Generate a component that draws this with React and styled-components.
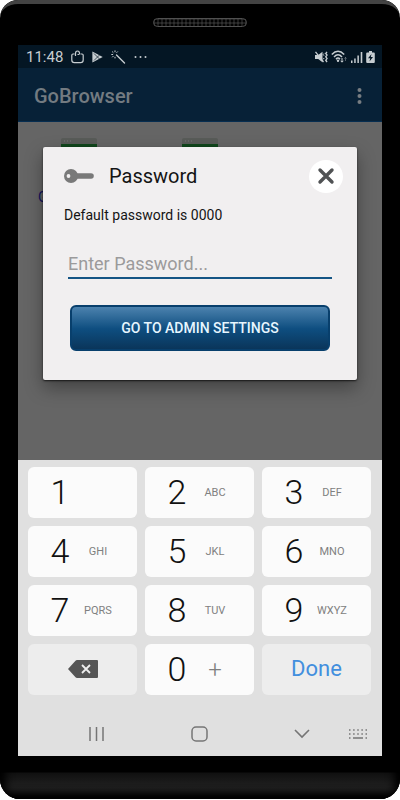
import React from 'react';
import styled, { createGlobalStyle, css } from 'styled-components';

const colors = {
  status: '#041624',
  bar: '#072137',
  page: '#656565',
  dialog: '#f1eff0',
  accent: '#155585',
  keyboard: '#e0e0e0',
  key: '#fbfbfb',
  action: '#ededed',
  done: '#428fde',
  nav: '#757575',
};

const GlobalStyle = createGlobalStyle`
  * {
    box-sizing: border-box;
  }
  body {
    margin: 0;
    background: #fff;
    font-family: Roboto, "Liberation Sans", sans-serif;
  }
  button, input {
    font-family: inherit;
    margin: 0;
  }
  svg {
    display: block;
  }
`;

const Phone = styled.div`
  display: flex;
  flex-direction: column;
  border-radius: 18px 18px 20px 20px;
  background: #000;
  overflow: hidden;
`;

const PhoneTop = styled.header`
  display: flex;
  justify-content: center;
  height: 45px;
  padding-top: 14px;
  border-top: 4px solid #434343;
  border-radius: 18px 18px 0 0;
`;

const Speaker = styled.div`
  width: 94px;
  height: 9px;
  border: 1px solid #505050;
  border-radius: 5px;
  background: radial-gradient(circle, #000 1px, #303030 2px) 0 0 / 4px 4px;
`;

const PhoneBottom = styled.footer`
  height: 43px;
  background: linear-gradient(#000 16px, #101010 17px, #292929 39px, #090909 43px);
  box-shadow: inset 6px -5px 8px #000, inset -6px -5px 8px #000;
`;

const Screen = styled.div`
  display: flex;
  flex-direction: column;
  margin: 0 18px;
  background: ${colors.keyboard};
`;

const StatusBar = styled.div`
  display: flex;
  align-items: center;
  justify-content: space-between;
  height: 23px;
  padding: 0 7px 0 8px;
  color: #c7cdd1;
  background: ${colors.status};
`;

const StatusGroup = styled.div`
  display: flex;
  align-items: center;
  gap: ${({ gap }) => gap};
`;

const Clock = styled.time`
  font-size: 15px;
  line-height: 20px;
`;

const AppBar = styled.div`
  display: flex;
  align-items: center;
  justify-content: space-between;
  height: 54px;
  padding: 2px 16px 0;
  border-bottom: 1px solid #062d50;
  color: #737b81;
  background: ${colors.bar};
`;

const AppTitle = styled.h1`
  margin: 0;
  font-size: 20px;
  font-weight: 500;
  line-height: 24px;
`;

const MenuButton = styled.button`
  padding: 0;
  border: 0;
  color: #777d82;
  background: none;
`;

const Content = styled.main`
  position: relative;
  height: 338px;
  padding: 16px 20px;
  background: ${colors.page};
`;

const Shortcuts = styled.div`
  display: flex;
  gap: 85px;
  padding-left: 23px;
`;

const ShortcutLabel = styled.div`
  margin-top: 29px;
  color: #12125c;
  font-size: 14px;
  line-height: 20px;
`;

const Dialog = styled.form`
  position: absolute;
  top: 25px;
  right: 25px;
  left: 25px;
  height: 233px;
  padding: 12px 25px 0 21px;
  border-radius: 2px;
  color: #141414;
  background: ${colors.dialog};
  box-shadow: 0 1px 2px rgba(0, 0, 0, 0.7), 0 8px 18px rgba(0, 0, 0, 0.35);
`;

const DialogHeader = styled.div`
  display: flex;
  align-items: center;
  gap: 15px;
  margin-right: -11px;
`;

const DialogTitle = styled.h2`
  flex: 1;
  margin: 0;
  font-size: 20px;
  font-weight: 400;
  line-height: 34px;
`;

const CloseButton = styled.button`
  display: flex;
  align-items: center;
  justify-content: center;
  width: 34px;
  height: 33px;
  padding: 0;
  border: 0;
  border-radius: 50%;
  color: #505254;
  background: #fff;
`;

const Hint = styled.label`
  display: block;
  margin-top: 12px;
  font-size: 14px;
  line-height: 20px;
`;

const PasswordInput = styled.input`
  display: block;
  width: calc(100% - 4px);
  height: 36px;
  margin: 18px 0 0 4px;
  padding: 6px 0 0;
  border: 0;
  border-bottom: 2px solid ${colors.accent};
  border-radius: 0;
  font-size: 18px;
  background: none;
  outline: none;
  &::placeholder {
    color: #9b9a9b;
    opacity: 1;
  }
`;

const SubmitButton = styled.button`
  display: block;
  width: calc(100% - 8px);
  height: 46px;
  margin: 26px 0 0 6px;
  padding: 0;
  border: 2px solid #083f6c;
  border-radius: 6px;
  color: #e7f6ff;
  font-size: 14px;
  font-weight: 500;
  background: linear-gradient(#4c82ae, #0e4e80 52%, #0a355a);
`;

const Keyboard = styled.div`
  display: grid;
  grid-template-columns: repeat(3, 1fr);
  gap: 8px;
  padding: 7px 11px 0 10px;
`;

const Key = styled.button`
  display: flex;
  align-items: center;
  height: 51px;
  padding: 0 20px 2px 13px;
  border: 0;
  border-radius: 6px;
  color: #111;
  background: ${colors.key};
  ${({ $action }) => $action && css`
    justify-content: center;
    padding: 0 0 2px;
    color: ${colors.done};
    font-size: 22px;
    background: ${colors.action};
  `}
`;

const Digit = styled.span`
  flex: 1;
  font-size: 34px;
  font-weight: 300;
  line-height: 40px;
  text-align: center;
`;

const Letters = styled.span`
  display: flex;
  flex: 1;
  justify-content: center;
  padding-top: 2px;
  color: #808080;
  font-size: ${({ $symbol }) => ($symbol ? '24px' : '11px')};
  font-weight: ${({ $symbol }) => ($symbol ? 300 : 400)};
  line-height: 24px;
`;

const NavBar = styled.nav`
  display: flex;
  align-items: center;
  justify-content: space-between;
  height: 61px;
  padding: 16px 14px 0 70px;
`;

const NavButton = styled.button`
  padding: 0;
  border: 0;
  color: ${colors.nav};
  background: none;
`;

const NavGroup = styled.div`
  display: flex;
  align-items: center;
  gap: 38px;
`;

const BagIcon = () => (
  <svg width="13" height="14" viewBox="0 0 13 14" fill="none" stroke="currentColor" strokeWidth="1.2">
    <path d="M3.5 4H2Q.8 4 .8 5.2V10Q.8 12.6 3.4 12.6h6.2q2.600 0 2.600-2.600V5.200Q12.200 4 11 4H9.500M4.500 6V3.500Q4.500 1 6.500 1t2 2.500V4M6.500 4.500h2" />
  </svg>
);

const PlayIcon = () => (
  <svg width="11" height="12" viewBox="0 0 11 12">
    <path d="M.4.5 10.700 6 .4 11.500z" fill="currentColor" />
    <path d="m2 2.500 5.500 5.500M2 9.500 7.500 4" stroke={colors.status} strokeWidth=".7" />
  </svg>
);

const WandIcon = () => (
  <svg width="15" height="14" viewBox="0 0 15 14" fill="none" stroke="currentColor" strokeLinecap="round">
    <path d="m5.500 5 8 8" strokeWidth="1.400" />
    <path d="M4 .8v1M1.400 1.800l.7.700M.7 4.500h1M1.500 7l.7-.7M4 8V7.200M6.500 1.800l-.7.700" />
  </svg>
);

const DotsIcon = () => (
  <svg width="14" height="4" viewBox="0 0 14 4" fill="currentColor">
    <circle cx="1.500" cy="2" r="1" />
    <circle cx="6.500" cy="2" r="1" />
    <circle cx="11.500" cy="2" r="1" />
  </svg>
);

const MuteIcon = () => (
  <svg width="13" height="12" viewBox="0 0 13 12" fill="none" stroke="currentColor">
    <path d="M0 4h3.200L7.500.8v10.500L3.200 8H0z" fill="currentColor" stroke="none" />
    <path d="m.5.8 8 10.200" strokeWidth="1.300" />
    <path d="m9 2.500-.8 1 .8 1.200M9 7l-.6 1.200" />
    <path d="m12 .8-1.200 1.600L12 4l-1.200 1.800L12 7.600l-1.200 1.600L12 11" strokeWidth="1.400" />
  </svg>
);

const WifiIcon = () => (
  <svg width="17" height="13" viewBox="0 0 17 13" fill="none" stroke="currentColor">
    <path d="M.8 4.500q6.200-6.400 12.400 0M3 6.900q4-4.200 8 0M5 9.200q2-2.200 4 0" strokeWidth="1.500" />
    <circle cx="7" cy="10.800" r="1.200" fill="currentColor" stroke="none" />
    <path d="M11 8v4M9.700 10.800 11 12.200l1.300-1.400" strokeWidth="1" />
    <path d="M14.500 11V7.500M13.400 8.600l1.100-1.200 1.100 1.200" opacity=".4" />
  </svg>
);

const SignalIcon = () => (
  <svg width="12" height="12" viewBox="0 0 12 12" fill="currentColor">
    <path d="M0 9.500h1.500V12H0zM3.200 7.500h1.500V12H3.200zM6.400 4.500h1.500V12H6.400zM9.700 1h1.600v11H9.700z" />
  </svg>
);

const BatteryIcon = () => (
  <svg width="9" height="12" viewBox="0 0 9 12">
    <path d="M3 0h3v1.400h1.800q1 0 1 1V11q0 1-1 1H1.200q-1 0-1-1V2.400q0-1 1-1H3z" fill="currentColor" />
    <path d="M5.500 3 2 7.200h2.200L3.500 10.500 7 6H4.800z" fill={colors.status} />
  </svg>
);

const MoreIcon = () => (
  <svg width="13" height="18" viewBox="0 0 13 18" fill="currentColor">
    <circle cx="6.500" cy="3" r="2" />
    <circle cx="6.500" cy="9" r="2" />
    <circle cx="6.500" cy="15" r="2" />
  </svg>
);

const SiteIcon = () => (
  <svg width="36" height="20" viewBox="0 0 36 20">
    <rect width="36" height="20" rx="2" fill="#585b58" />
    <path d="M0 6h36v14H0z" fill="#10461c" />
    <path d="M3 3h1m2 0h1m2 0h1" stroke="#777" />
  </svg>
);

const KeyIcon = () => (
  <svg width="30" height="16" viewBox="0 0 30 16">
    <circle cx="7" cy="8" r="7" fill="#797979" />
    <path d="M7 5.200h20a2.800 2.800 0 0 1 0 5.600H7z" fill="#797979" />
    <circle cx="4.500" cy="8" r="1.900" fill={colors.dialog} />
  </svg>
);

const CloseIcon = () => (
  <svg width="18" height="18" viewBox="0 0 18 18" stroke="currentColor" strokeWidth="3.400" strokeLinecap="round">
    <path d="m3 3 12 12M15 3 3 15" />
  </svg>
);

const BackspaceIcon = () => (
  <svg width="30" height="18" viewBox="0 0 30 18">
    <path d="m0 9 7.500-8.200Q8.200 0 9 0h20q1 0 1 1v16q0 1-1 1H9q-.8 0-1.500-.8z" fill="#555" />
    <path d="m14 5 8 8m0-8-8 8" stroke="#eee" strokeWidth="1.800" />
  </svg>
);

const RecentsIcon = () => (
  <svg width="16" height="16" viewBox="0 0 16 16" stroke="currentColor" strokeWidth="1.500">
    <path d="M2 1v14M8.500 1v14M15 1v14" />
  </svg>
);

const HomeIcon = () => (
  <svg width="17" height="16" viewBox="0 0 17 16" fill="none" stroke="currentColor" strokeWidth="1.500">
    <rect x="1" y="1" width="15" height="14" rx="4" />
  </svg>
);

const DownIcon = () => (
  <svg width="16" height="16" viewBox="0 0 16 16" fill="none" stroke="currentColor" strokeWidth="1.600">
    <path d="m1 4 7 7 7-7" />
  </svg>
);

const KeyboardIcon = () => (
  <svg width="20" height="12" viewBox="0 0 20 12" stroke="currentColor" strokeWidth="1.500">
    <path d="M1 2h19M1 6h19" strokeDasharray="1.500 2.625" />
    <path d="M1 10h1.500M5 10h10M17.500 10H19" />
  </svg>
);

const keys = [
  ['1', ''],
  ['2', 'ABC'],
  ['3', 'DEF'],
  ['4', 'GHI'],
  ['5', 'JKL'],
  ['6', 'MNO'],
  ['7', 'PQRS'],
  ['8', 'TUV'],
  ['9', 'WXYZ'],
];

const NumberKey = ({ digit, letters }) => (
  <Key type="button">
    <Digit>{digit}</Digit>
    <Letters $symbol={letters === '+'}>{letters}</Letters>
  </Key>
);

const App = () => (
  <>
    <GlobalStyle />
    <Phone>
      <PhoneTop>
        <Speaker />
      </PhoneTop>
      <Screen>
        <StatusBar>
          <StatusGroup gap="8px">
            <Clock>11:48</Clock>
            <BagIcon />
            <PlayIcon />
            <WandIcon />
            <DotsIcon />
          </StatusGroup>
          <StatusGroup gap="3px">
            <MuteIcon />
            <WifiIcon />
            <SignalIcon />
            <BatteryIcon />
          </StatusGroup>
        </StatusBar>
        <AppBar>
          <AppTitle>GoBrowser</AppTitle>
          <MenuButton type="button" aria-label="Menu">
            <MoreIcon />
          </MenuButton>
        </AppBar>
        <Content>
          <Shortcuts>
            <SiteIcon />
            <SiteIcon />
          </Shortcuts>
          <ShortcutLabel>G</ShortcutLabel>
          <Dialog onSubmit={(e) => e.preventDefault()}>
            <DialogHeader>
              <KeyIcon />
              <DialogTitle>Password</DialogTitle>
              <CloseButton type="button" aria-label="Close">
                <CloseIcon />
              </CloseButton>
            </DialogHeader>
            <Hint htmlFor="password">Default password is 0000</Hint>
            <PasswordInput id="password" type="password" inputMode="numeric" placeholder="Enter Password..." />
            <SubmitButton type="submit">GO TO ADMIN SETTINGS</SubmitButton>
          </Dialog>
        </Content>
        <Keyboard>
          {keys.map(([digit, letters]) => (
            <NumberKey key={digit} digit={digit} letters={letters} />
          ))}
          <Key type="button" $action aria-label="Delete">
            <BackspaceIcon />
          </Key>
          <NumberKey digit="0" letters="+" />
          <Key type="button" $action>Done</Key>
        </Keyboard>
        <NavBar>
          <NavButton type="button" aria-label="Recent apps">
            <RecentsIcon />
          </NavButton>
          <NavButton type="button" aria-label="Home">
            <HomeIcon />
          </NavButton>
          <NavGroup>
            <NavButton type="button" aria-label="Hide keyboard">
              <DownIcon />
            </NavButton>
            <NavButton type="button" aria-label="Change keyboard">
              <KeyboardIcon />
            </NavButton>
          </NavGroup>
        </NavBar>
      </Screen>
      <PhoneBottom />
    </Phone>
  </>
);

export default App;
